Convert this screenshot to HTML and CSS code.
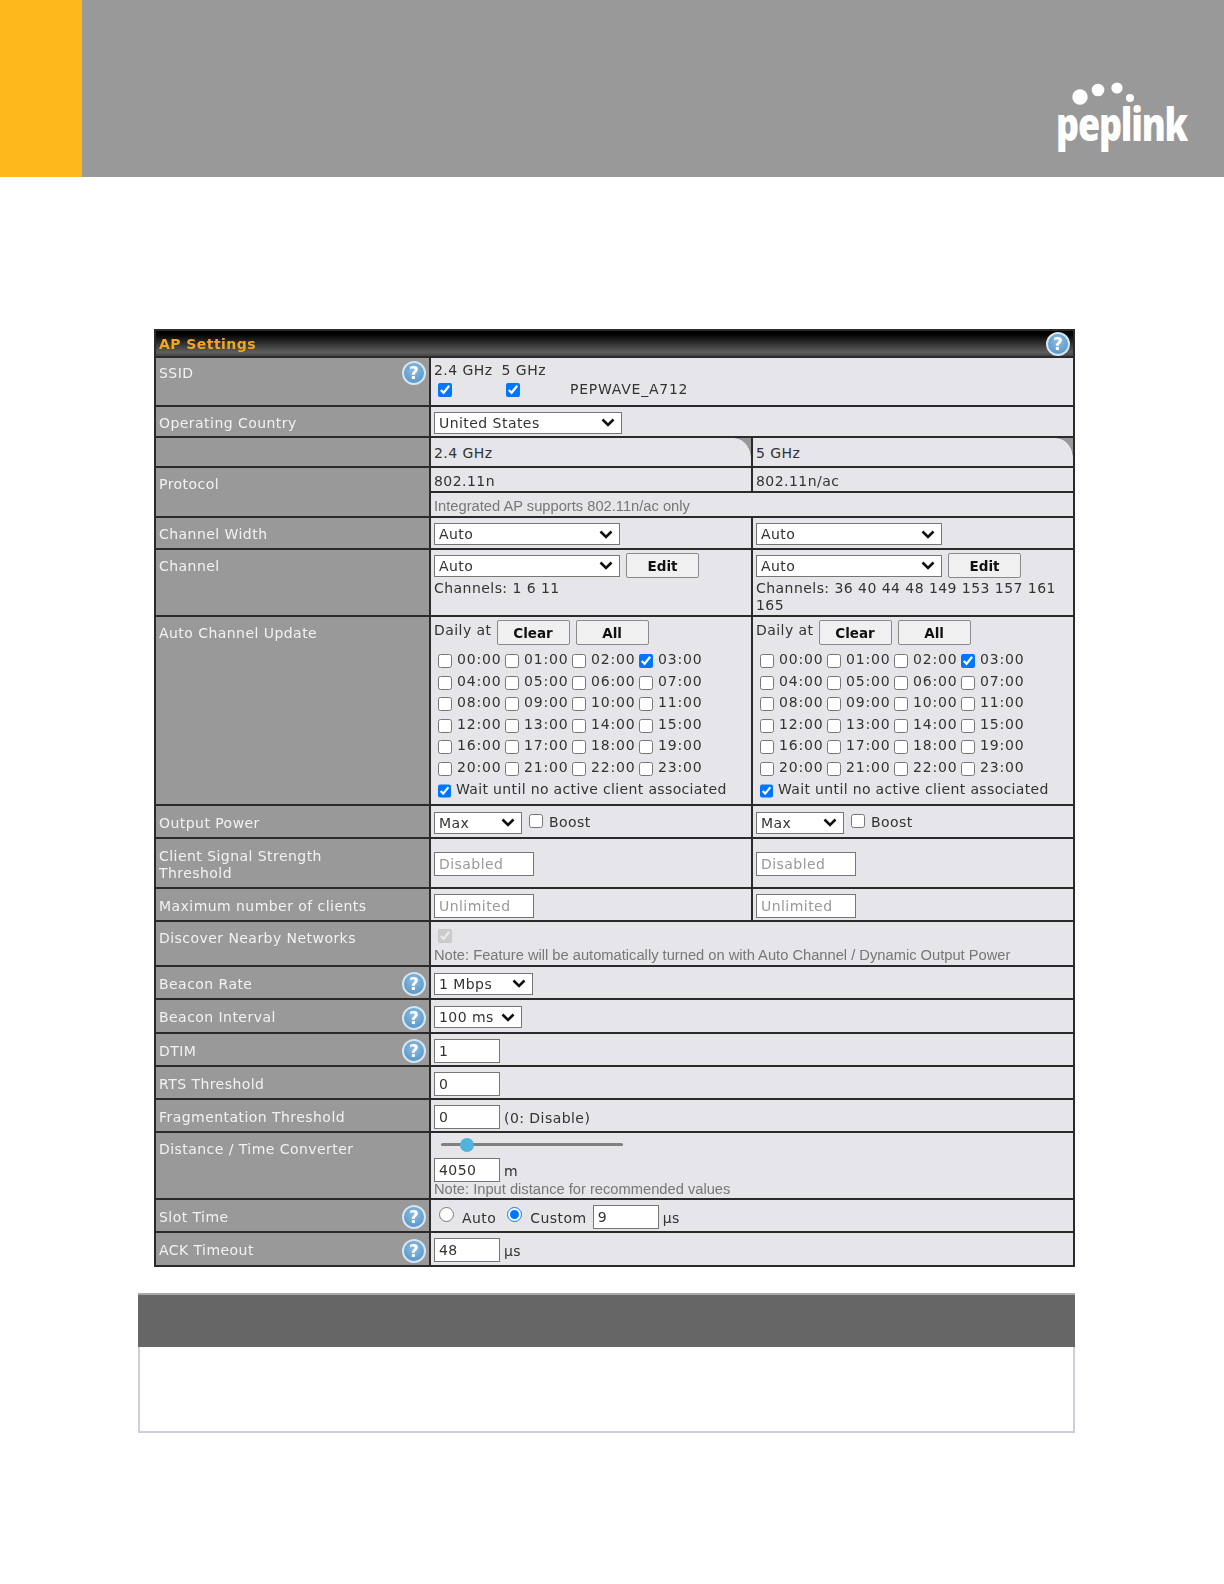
FILE: index.html
```html
<!DOCTYPE html>
<html lang="en">
<head>
    <meta charset="UTF-8">
    <title>AP Settings</title>
    <link rel="stylesheet" href="styles.css">
</head>
<body>
    <div class="topbar">
        <div class="topbar_tab"></div>
        <div class="topbar_fill">
            <div class="logo">
                <svg class="logo_dots" width="66" height="36" viewBox="0 0 66 36">
                    <circle cx="8" cy="17" r="7.7" fill="#fff"/>
                    <circle cx="26" cy="10" r="6.3" fill="#fff"/>
                    <circle cx="45" cy="8" r="5.6" fill="#fff"/>
                    <circle cx="58" cy="18" r="4" fill="#fff"/>
                </svg>
                <span class="logo_text">peplink</span>
            </div>
        </div>
    </div>

    <div class="content">
        <table class="settings">
            <colgroup>
                <col class="col_label">
                <col class="col_value">
                <col class="col_value">
            </colgroup>
            <tr class="h27">
                <th colspan="3" class="title">
                    <div class="label_row">AP Settings<span class="help">?</span></div>
                </th>
            </tr>
            <tr class="h49">
                <td class="label top tight"><div class="label_row">SSID<span class="help">?</span></div></td>
                <td colspan="2" class="value top tight">
                    <div class="ssid_head"><span>2.4 GHz</span><span>5 GHz</span></div>
                    <div class="ssid_row">
                        <input type="checkbox" checked>
                        <input type="checkbox" checked>
                        <span class="ssid_name">PEPWAVE_A712</span>
                    </div>
                </td>
            </tr>
            <tr class="h31">
                <td class="label">Operating Country</td>
                <td colspan="2" class="value">
                    <select class="sel_country"><option>United States</option></select>
                </td>
            </tr>
            <tr class="h30">
                <td class="label"></td>
                <td class="value band">2.4 GHz</td>
                <td class="value band">5 GHz</td>
            </tr>
            <tr class="h25">
                <td class="label top" rowspan="2">Protocol</td>
                <td class="value low">802.11n</td>
                <td class="value low">802.11n/ac</td>
            </tr>
            <tr class="h25">
                <td colspan="2" class="value note low">Integrated AP supports 802.11n/ac only</td>
            </tr>
            <tr class="h32">
                <td class="label">Channel Width</td>
                <td class="value"><select class="sel_wide"><option>Auto</option></select></td>
                <td class="value"><select class="sel_wide"><option>Auto</option></select></td>
            </tr>
            <tr class="h67">
                <td class="label top">Channel</td>
                <td class="value top tight">
                    <div class="inline_row"><select class="sel_wide"><option>Auto</option></select><button>Edit</button></div>
                    <div class="channels">Channels: 1 6 11</div>
                </td>
                <td class="value top tight">
                    <div class="inline_row"><select class="sel_wide"><option>Auto</option></select><button>Edit</button></div>
                    <div class="channels">Channels: 36 40 44 48 149 153 157 161 165</div>
                </td>
            </tr>
            <tr class="h189">
                <td class="label top">Auto Channel Update</td>
                <td class="value top tight">
                    <div class="inline_row"><span class="daily">Daily at</span><button>Clear</button><button>All</button></div>
                    <div class="hours">
                        <label><input type="checkbox">00:00</label><label><input type="checkbox">01:00</label><label><input type="checkbox">02:00</label><label><input type="checkbox" checked>03:00</label>
                        <label><input type="checkbox">04:00</label><label><input type="checkbox">05:00</label><label><input type="checkbox">06:00</label><label><input type="checkbox">07:00</label>
                        <label><input type="checkbox">08:00</label><label><input type="checkbox">09:00</label><label><input type="checkbox">10:00</label><label><input type="checkbox">11:00</label>
                        <label><input type="checkbox">12:00</label><label><input type="checkbox">13:00</label><label><input type="checkbox">14:00</label><label><input type="checkbox">15:00</label>
                        <label><input type="checkbox">16:00</label><label><input type="checkbox">17:00</label><label><input type="checkbox">18:00</label><label><input type="checkbox">19:00</label>
                        <label><input type="checkbox">20:00</label><label><input type="checkbox">21:00</label><label><input type="checkbox">22:00</label><label><input type="checkbox">23:00</label>
                        <label class="wait"><input type="checkbox" checked>Wait until no active client associated</label>
                    </div>
                </td>
                <td class="value top tight">
                    <div class="inline_row"><span class="daily">Daily at</span><button>Clear</button><button>All</button></div>
                    <div class="hours">
                        <label><input type="checkbox">00:00</label><label><input type="checkbox">01:00</label><label><input type="checkbox">02:00</label><label><input type="checkbox" checked>03:00</label>
                        <label><input type="checkbox">04:00</label><label><input type="checkbox">05:00</label><label><input type="checkbox">06:00</label><label><input type="checkbox">07:00</label>
                        <label><input type="checkbox">08:00</label><label><input type="checkbox">09:00</label><label><input type="checkbox">10:00</label><label><input type="checkbox">11:00</label>
                        <label><input type="checkbox">12:00</label><label><input type="checkbox">13:00</label><label><input type="checkbox">14:00</label><label><input type="checkbox">15:00</label>
                        <label><input type="checkbox">16:00</label><label><input type="checkbox">17:00</label><label><input type="checkbox">18:00</label><label><input type="checkbox">19:00</label>
                        <label><input type="checkbox">20:00</label><label><input type="checkbox">21:00</label><label><input type="checkbox">22:00</label><label><input type="checkbox">23:00</label>
                        <label class="wait"><input type="checkbox" checked>Wait until no active client associated</label>
                    </div>
                </td>
            </tr>
            <tr class="h33">
                <td class="label">Output Power</td>
                <td class="value"><div class="inline_row"><select class="sel_max"><option>Max</option></select><input type="checkbox" class="boost"><span>Boost</span></div></td>
                <td class="value"><div class="inline_row"><select class="sel_max"><option>Max</option></select><input type="checkbox" class="boost"><span>Boost</span></div></td>
            </tr>
            <tr class="h50">
                <td class="label">Client Signal Strength<br>Threshold</td>
                <td class="value"><input type="text" class="txt_wide" placeholder="Disabled"></td>
                <td class="value"><input type="text" class="txt_wide" placeholder="Disabled"></td>
            </tr>
            <tr class="h33">
                <td class="label">Maximum number of clients</td>
                <td class="value"><input type="text" class="txt_wide" placeholder="Unlimited"></td>
                <td class="value"><input type="text" class="txt_wide" placeholder="Unlimited"></td>
            </tr>
            <tr class="h45">
                <td class="label top">Discover Nearby Networks</td>
                <td colspan="2" class="value top">
                    <input type="checkbox" class="discover" checked disabled>
                    <div class="note">Note: Feature will be automatically turned on with Auto Channel / Dynamic Output Power</div>
                </td>
            </tr>
            <tr class="h33">
                <td class="label"><div class="label_row">Beacon Rate<span class="help">?</span></div></td>
                <td colspan="2" class="value"><select class="sel_rate"><option>1 Mbps</option></select></td>
            </tr>
            <tr class="h34">
                <td class="label"><div class="label_row">Beacon Interval<span class="help">?</span></div></td>
                <td colspan="2" class="value"><select class="sel_max"><option>100 ms</option></select></td>
            </tr>
            <tr class="h33">
                <td class="label"><div class="label_row">DTIM<span class="help">?</span></div></td>
                <td colspan="2" class="value"><input type="text" class="txt_small" value="1"></td>
            </tr>
            <tr class="h33">
                <td class="label">RTS Threshold</td>
                <td colspan="2" class="value"><input type="text" class="txt_small" value="0"></td>
            </tr>
            <tr class="h33">
                <td class="label">Fragmentation Threshold</td>
                <td colspan="2" class="value"><div class="inline_row unit"><input type="text" class="txt_small" value="0"><span>(0: Disable)</span></div></td>
            </tr>
            <tr class="h67">
                <td class="label top">Distance / Time Converter</td>
                <td colspan="2" class="value top tight">
                    <input type="range" class="slider" min="0" max="36000" value="4050">
                    <div class="inline_row unit"><input type="text" class="txt_small" value="4050"><span>m</span></div>
                    <div class="note note_tight">Note: Input distance for recommended values</div>
                </td>
            </tr>
            <tr class="h33">
                <td class="label"><div class="label_row">Slot Time<span class="help">?</span></div></td>
                <td colspan="2" class="value">
                    <div class="inline_row unit slot">
                        <input type="radio" name="slot"><span>Auto</span>
                        <input type="radio" name="slot" checked><span>Custom</span>
                        <input type="text" class="txt_small" value="9"><span>µs</span>
                    </div>
                </td>
            </tr>
            <tr class="h34">
                <td class="label"><div class="label_row">ACK Timeout<span class="help">?</span></div></td>
                <td colspan="2" class="value"><div class="inline_row unit"><input type="text" class="txt_small" value="48"><span>µs</span></div></td>
            </tr>
        </table>

        <div class="tip_box">
            <div class="tip_head"></div>
            <div class="tip_body"></div>
        </div>
    </div>
</body>
</html>
```

FILE: styles.css
```css
body {
    margin: 0;
    background-color: #ffffff;
    font-family: "DejaVu Sans", Verdana, sans-serif;
    font-size: 14px;
    color: #333333;
}

/* top band */
.topbar {
    display: flex;
    height: 177px;
}

.topbar_tab {
    width: 82px;
    background-color: #ffb81c;
}

.topbar_fill {
    flex: 1;
    display: flex;
    justify-content: flex-end;
    align-items: flex-end;
    padding: 0 38px 29px 0;
    background-color: #999999;
}

.logo {
    display: flex;
    flex-direction: column;
    align-items: flex-start;
    width: 130px;
}

.logo_dots {
    margin: 0 0 -18px 16px;
}

.logo_text {
    font-family: "Open Sans", sans-serif;
    font-weight: 800;
    font-size: 46px;
    line-height: 50px;
    letter-spacing: -1.5px;
    color: #ffffff;
    transform: scaleX(0.78);
    transform-origin: left center;
}

.content {
    padding: 152px 149px 0 138px;
}

/* settings table */
.settings {
    width: 919px;
    margin-left: 16px;
    border-collapse: collapse;
    table-layout: fixed;
    border: 2px solid #111111;
    letter-spacing: 0.45px;
    filter: blur(0.3px);
}

.col_label {
    width: 275px;
}

.col_value {
    width: 322px;
}

.settings td, .settings th {
    padding: 0 3px;
    border: 2px solid #2a2a2a;
    text-align: left;
    font-weight: normal;
}

.h25 { height: 25px; }
.h27 { height: 27px; }
.h30 { height: 30px; }
.h31 { height: 31px; }
.h32 { height: 32px; }
.h33 { height: 33px; }
.h34 { height: 34px; }
.h45 { height: 45px; }
.h49 { height: 49px; }
.h50 { height: 50px; }
.h67 { height: 67px; }
.h189 { height: 189px; }

.settings .title {
    background: linear-gradient(to bottom, #000000 12%, #5e5e5e 85%, #444444);
    color: #f0a61e;
    font-weight: bold;
}

.settings .label {
    padding-top: 3px;
    background-color: #999999;
    color: #f2f2f2;
    line-height: 17px;
}

.settings .value {
    padding-top: 2px;
    background-color: #e5e5ea;
    line-height: 17px;
}

.settings .value.low {
    padding-top: 4px;
}

.settings .top {
    vertical-align: top;
    padding-top: 6px;
}

.settings .label.top {
    padding-top: 8px;
}

.settings .top.tight, .settings .label.top.tight {
    padding-top: 3px;
}

.settings .value.note, .note {
    font-family: "Liberation Sans", Arial, sans-serif;
    font-size: 14.7px;
    letter-spacing: 0;
    color: #777777;
}

.label_row {
    display: flex;
    justify-content: space-between;
    align-items: center;
}

.help {
    width: 20px;
    height: 20px;
    border: 2px solid #d5e6f3;
    border-radius: 50%;
    background: radial-gradient(circle at 50% 35%, #8fbde0, #4a8fc6);
    color: #ffffff;
    font-weight: bold;
    font-size: 17px;
    line-height: 20px;
    letter-spacing: 0;
    text-align: center;
    flex-shrink: 0;
}

/* the curved tab on the band headers */
.settings .band {
    position: relative;
}

.settings .band::after {
    content: "";
    position: absolute;
    top: 0;
    right: 0;
    width: 17px;
    height: 20px;
    background: radial-gradient(ellipse 17px 20px at 0 100%, transparent 97%, #999999 100%);
}

/* form controls */
input[type="checkbox"] {
    width: 14px;
    height: 14px;
    margin: 0;
}

select, input[type="text"] {
    box-sizing: border-box;
    margin: 0;
    border: 1px solid #767676;
    background-color: #ffffff;
    font-family: "DejaVu Sans", Verdana, sans-serif;
    font-size: 14px;
    letter-spacing: 0.45px;
    color: #333333;
    border-radius: 0;
}

select {
    height: 22px;
    padding: 0 20px 0 4px;
    appearance: none;
    background-image: url("data:image/svg+xml,%3Csvg xmlns='http://www.w3.org/2000/svg' width='14' height='9' viewBox='0 0 14 9'%3E%3Cpath d='M1.5 1.5 L7 7 L12.5 1.5' fill='none' stroke='%23111' stroke-width='2.6'/%3E%3C/svg%3E");
    background-repeat: no-repeat;
    background-position: right 6px center;
}

input[type="text"] {
    height: 24px;
    padding: 0 4px;
}

input::placeholder {
    color: #999999;
}

button {
    box-sizing: border-box;
    width: 73px;
    height: 25px;
    padding: 0;
    border: 1px solid #8a8a8a;
    border-radius: 2px;
    background-color: #f0f0f0;
    font-family: "DejaVu Sans", Verdana, sans-serif;
    font-size: 13.5px;
    font-weight: bold;
    color: #111111;
}

.sel_country { width: 188px; }
.sel_wide { width: 186px; }
.sel_max { width: 88px; }
.sel_rate { width: 99px; }
.txt_wide { width: 100px; }
.txt_small { width: 66px; }

.inline_row {
    display: flex;
    align-items: center;
    gap: 6px;
}

.inline_row.unit {
    gap: 4px;
}

.unit span {
    padding-top: 3px;
}

.ssid_head {
    display: flex;
    gap: 9px;
    margin-top: 1px;
}

.ssid_row {
    display: flex;
    align-items: center;
    margin: 2px 0 0 4px;
}

.ssid_row input + input {
    margin-left: 54px;
}

.ssid_name {
    margin-left: 50px;
    letter-spacing: 0.75px;
}

.channels {
    margin-top: 2px;
}

.hours {
    display: grid;
    grid-template-columns: repeat(4, 67px);
    grid-auto-rows: 21.55px;
    margin-top: 4px;
    padding-left: 4px;
    letter-spacing: 0.85px;
}

.hours label {
    display: flex;
    align-items: center;
    gap: 3px;
    white-space: nowrap;
}

.hours input {
    margin-top: 3px;
    margin-right: 2px;
}

.hours .wait {
    grid-column: 1 / 5;
    letter-spacing: 0.35px;
}

.daily {
    margin: -4px -1px 0 0;
}

input.boost {
    margin: 0 0 4px 1px;
}

input.discover {
    display: block;
    margin: 1px 0 4px 4px;
}

.slider {
    display: block;
    width: 182px;
    height: 14px;
    margin: 1px 0 7px 7px;
    appearance: none;
    background: transparent;
}

.slider::-webkit-slider-runnable-track {
    height: 3px;
    border-radius: 2px;
    background-color: #808080;
}

.slider::-webkit-slider-thumb {
    appearance: none;
    width: 14px;
    height: 14px;
    margin-top: -5px;
    border-radius: 50%;
    background-color: #4fb3dd;
}

.note_tight {
    margin-top: -1px;
}

.slot input[type="radio"] {
    width: 15px;
    height: 15px;
    margin: 0 4px 4px 5px;
}

.slot span {
    margin-right: 2px;
}

/* empty box under the table */
.tip_box {
    width: 937px;
    margin-top: 26px;
}

.tip_head {
    height: 52px;
    border-top: 2px solid #a8a8a8;
    background-color: #666666;
}

.tip_body {
    height: 84px;
    border: 2px solid #cfcfdc;
    border-top: none;
    background-color: #ffffff;
}
```
